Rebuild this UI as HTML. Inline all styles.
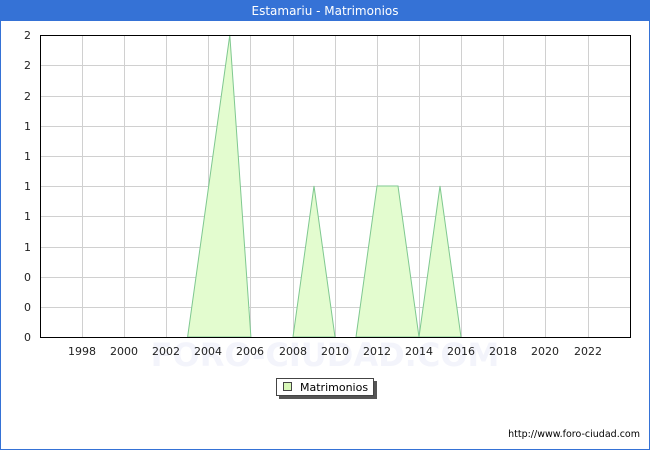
<!DOCTYPE html>
<html><head><meta charset="utf-8"><style>
html,body{margin:0;padding:0;background:#fff;}
body{width:650px;height:450px;overflow:hidden;font-family:"DejaVu Sans","Liberation Sans",sans-serif;}
</style></head><body>
<svg width="650" height="450" xmlns="http://www.w3.org/2000/svg" font-family="DejaVu Sans, Liberation Sans, sans-serif">
<rect x="0.5" y="0.5" width="649" height="449" fill="#fff" stroke="#3572d6"/>
<rect x="0" y="0" width="650" height="21" fill="#3572d6"/>
<text x="325" y="15" font-size="12" fill="#fff" text-anchor="middle">Estamariu - Matrimonios</text>
<g stroke="#d0d0d0" stroke-width="1">
<line x1="40" y1="65.5" x2="631" y2="65.5"/><line x1="40" y1="96.5" x2="631" y2="96.5"/>
<line x1="40" y1="126.5" x2="631" y2="126.5"/><line x1="40" y1="156.5" x2="631" y2="156.5"/>
<line x1="40" y1="186.5" x2="631" y2="186.5"/><line x1="40" y1="216.5" x2="631" y2="216.5"/>
<line x1="40" y1="247.5" x2="631" y2="247.5"/><line x1="40" y1="277.5" x2="631" y2="277.5"/>
<line x1="40" y1="307.5" x2="631" y2="307.5"/>
<line x1="82.5" y1="35" x2="82.5" y2="337"/><line x1="124.5" y1="35" x2="124.5" y2="337"/>
<line x1="166.5" y1="35" x2="166.5" y2="337"/><line x1="208.5" y1="35" x2="208.5" y2="337"/>
<line x1="250.5" y1="35" x2="250.5" y2="337"/><line x1="293.5" y1="35" x2="293.5" y2="337"/>
<line x1="335.5" y1="35" x2="335.5" y2="337"/><line x1="377.5" y1="35" x2="377.5" y2="337"/>
<line x1="419.5" y1="35" x2="419.5" y2="337"/><line x1="461.5" y1="35" x2="461.5" y2="337"/>
<line x1="503.5" y1="35" x2="503.5" y2="337"/><line x1="545.5" y1="35" x2="545.5" y2="337"/>
<line x1="588.5" y1="35" x2="588.5" y2="337"/>
</g>
<text x="325" y="366" font-size="32" fill="#f3f4fb" text-anchor="middle" font-weight="bold">FORO-CIUDAD.COM</text>
<path d="M187.6,337 L208.7,186 L229.8,35 L250.9,337 Z M293,337 L314,186 L335,337 Z M356,337 L377,186 L398,186 L419,337 Z M419,337 L440,186 L461,337 Z" fill="#e3fccf" stroke="#7fc890" stroke-width="1"/>
<rect x="40.5" y="35.5" width="590" height="302" fill="none" stroke="#000"/>
<g font-size="11" fill="#222" text-anchor="end">
<text x="31" y="39">2</text><text x="31" y="69">2</text><text x="31" y="100">2</text>
<text x="31" y="130">1</text><text x="31" y="160">1</text><text x="31" y="190">1</text>
<text x="31" y="220">1</text><text x="31" y="251">1</text><text x="31" y="281">0</text>
<text x="31" y="311">0</text><text x="31" y="341">0</text>
</g>
<g font-size="11" fill="#222" text-anchor="middle">
<text x="82" y="355">1998</text><text x="124" y="355">2000</text><text x="166" y="355">2002</text>
<text x="208" y="355">2004</text><text x="250" y="355">2006</text><text x="293" y="355">2008</text>
<text x="335" y="355">2010</text><text x="377" y="355">2012</text><text x="419" y="355">2014</text>
<text x="461" y="355">2016</text><text x="503" y="355">2018</text><text x="545" y="355">2020</text>
<text x="588" y="355">2022</text>
</g>
<rect x="279" y="381" width="98" height="18" fill="#555"/>
<rect x="276.5" y="378.5" width="97" height="17" fill="#fff" stroke="#444"/>
<rect x="283.5" y="382.5" width="8" height="8" fill="#d8f8b8" stroke="#444"/>
<text x="300" y="391" font-size="11" fill="#000">Matrimonios</text>
<text x="640" y="437" font-size="9.5" fill="#000" text-anchor="end">http://www.foro-ciudad.com</text>
</svg>
</body></html>
